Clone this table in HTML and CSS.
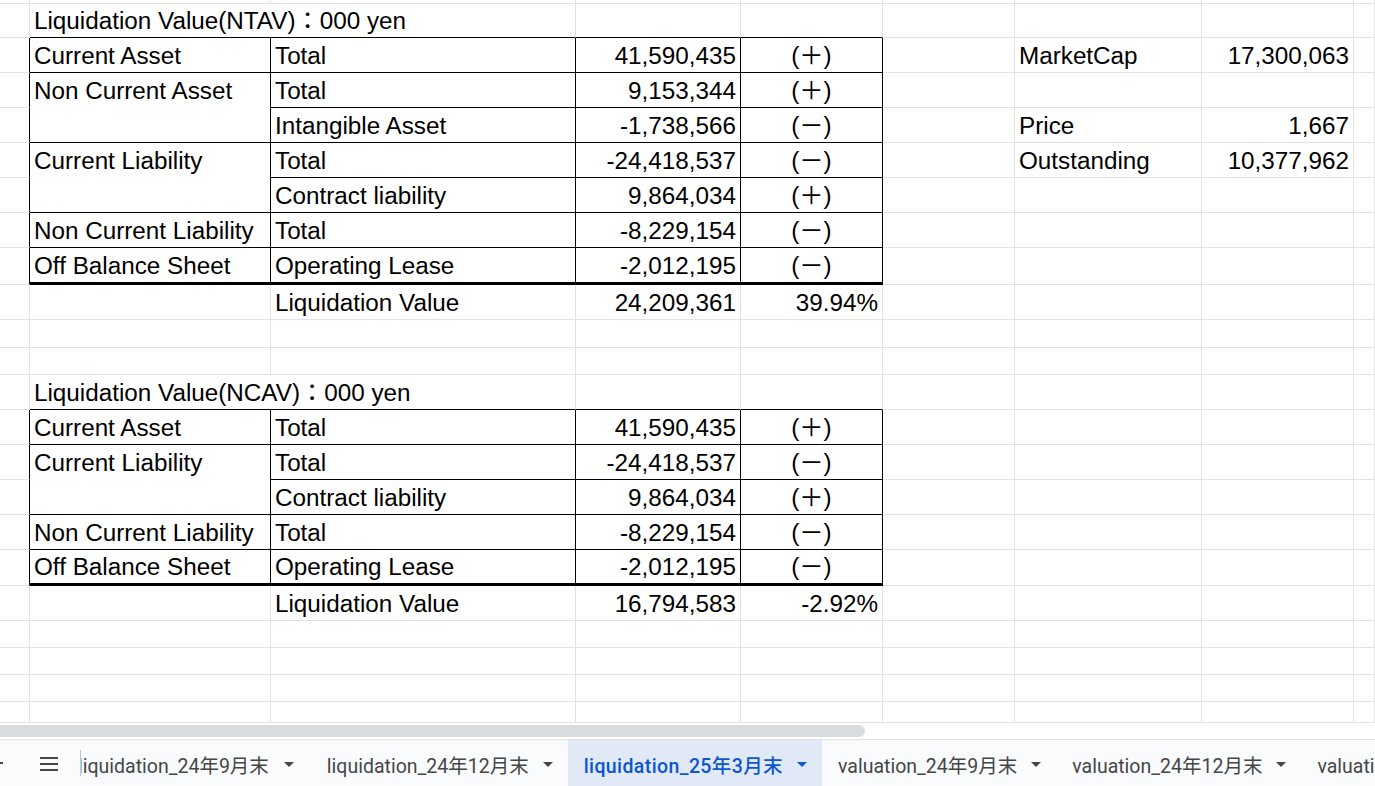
FILE: index.html
```html
<!DOCTYPE html>
<html lang="ja">
<head>
<meta charset="utf-8">
<title>liquidation_25年3月末</title>
<link rel="stylesheet" href="styles.css">
</head>
<body>
<div class="app">
  <div class="sheet">
    <!-- row 0 (partial) -->
    <div class="c"></div><div class="c"></div><div class="c"></div><div class="c"></div><div class="c"></div><div class="c"></div><div class="c"></div><div class="c"></div><div class="c"></div>
    <!-- row 1 -->
    <div class="c"></div><div class="c w2 kb">Liquidation Value(NTAV)：000 yen</div><div class="c kb"></div><div class="c kb"></div><div class="c"></div><div class="c"></div><div class="c"></div><div class="c"></div>
    <!-- row 2 -->
    <div class="c kr"></div><div class="c kb kr">Current Asset</div><div class="c kb kr">Total</div><div class="c kb kr r">41,590,435</div><div class="c kb kr m">(＋)</div><div class="c"></div><div class="c">MarketCap</div><div class="c r">17,300,063</div><div class="c"></div>
    <!-- row 3 -->
    <div class="c kr"></div><div class="c kb kr s2">Non Current Asset</div><div class="c kb kr">Total</div><div class="c kb kr r">9,153,344</div><div class="c kb kr m">(＋)</div><div class="c"></div><div class="c"></div><div class="c"></div><div class="c"></div>
    <!-- row 4 -->
    <div class="c kr"></div><div class="c kb kr">Intangible Asset</div><div class="c kb kr r">-1,738,566</div><div class="c kb kr m">(－)</div><div class="c"></div><div class="c">Price</div><div class="c r">1,667</div><div class="c"></div>
    <!-- row 5 -->
    <div class="c kr"></div><div class="c kb kr s2">Current Liability</div><div class="c kb kr">Total</div><div class="c kb kr r">-24,418,537</div><div class="c kb kr m">(－)</div><div class="c"></div><div class="c">Outstanding</div><div class="c r">10,377,962</div><div class="c"></div>
    <!-- row 6 -->
    <div class="c kr"></div><div class="c kb kr">Contract liability</div><div class="c kb kr r">9,864,034</div><div class="c kb kr m">(＋)</div><div class="c"></div><div class="c"></div><div class="c"></div><div class="c"></div>
    <!-- row 7 -->
    <div class="c kr"></div><div class="c kb kr">Non Current Liability</div><div class="c kb kr">Total</div><div class="c kb kr r">-8,229,154</div><div class="c kb kr m">(－)</div><div class="c"></div><div class="c"></div><div class="c"></div><div class="c"></div>
    <!-- row 8 -->
    <div class="c kr"></div><div class="c k3 kr">Off Balance Sheet</div><div class="c k3 kr">Operating Lease</div><div class="c k3 kr r">-2,012,195</div><div class="c k3 kr m">(－)</div><div class="c"></div><div class="c"></div><div class="c"></div><div class="c"></div>
    <!-- row 9 -->
    <div class="c"></div><div class="c"></div><div class="c">Liquidation Value</div><div class="c r">24,209,361</div><div class="c r">39.94%</div><div class="c"></div><div class="c"></div><div class="c"></div><div class="c"></div>
    <!-- row 10 -->
    <div class="c"></div><div class="c"></div><div class="c"></div><div class="c"></div><div class="c"></div><div class="c"></div><div class="c"></div><div class="c"></div><div class="c"></div>
    <!-- row 11 -->
    <div class="c"></div><div class="c"></div><div class="c"></div><div class="c"></div><div class="c"></div><div class="c"></div><div class="c"></div><div class="c"></div><div class="c"></div>
    <!-- row 12 -->
    <div class="c"></div><div class="c w2 kb">Liquidation Value(NCAV)：000 yen</div><div class="c kb"></div><div class="c kb"></div><div class="c"></div><div class="c"></div><div class="c"></div><div class="c"></div>
    <!-- row 13 -->
    <div class="c kr"></div><div class="c kb kr">Current Asset</div><div class="c kb kr">Total</div><div class="c kb kr r">41,590,435</div><div class="c kb kr m">(＋)</div><div class="c"></div><div class="c"></div><div class="c"></div><div class="c"></div>
    <!-- row 14 -->
    <div class="c kr"></div><div class="c kb kr s2">Current Liability</div><div class="c kb kr">Total</div><div class="c kb kr r">-24,418,537</div><div class="c kb kr m">(－)</div><div class="c"></div><div class="c"></div><div class="c"></div><div class="c"></div>
    <!-- row 15 -->
    <div class="c kr"></div><div class="c kb kr">Contract liability</div><div class="c kb kr r">9,864,034</div><div class="c kb kr m">(＋)</div><div class="c"></div><div class="c"></div><div class="c"></div><div class="c"></div>
    <!-- row 16 -->
    <div class="c kr"></div><div class="c kb kr">Non Current Liability</div><div class="c kb kr">Total</div><div class="c kb kr r">-8,229,154</div><div class="c kb kr m">(－)</div><div class="c"></div><div class="c"></div><div class="c"></div><div class="c"></div>
    <!-- row 17 -->
    <div class="c kr"></div><div class="c k3 kr">Off Balance Sheet</div><div class="c k3 kr">Operating Lease</div><div class="c k3 kr r">-2,012,195</div><div class="c k3 kr m">(－)</div><div class="c"></div><div class="c"></div><div class="c"></div><div class="c"></div>
    <!-- row 18 -->
    <div class="c"></div><div class="c"></div><div class="c">Liquidation Value</div><div class="c r">16,794,583</div><div class="c r">-2.92%</div><div class="c"></div><div class="c"></div><div class="c"></div><div class="c"></div>
    <!-- rows 19-22 -->
    <div class="c"></div><div class="c"></div><div class="c"></div><div class="c"></div><div class="c"></div><div class="c"></div><div class="c"></div><div class="c"></div><div class="c"></div>
    <div class="c"></div><div class="c"></div><div class="c"></div><div class="c"></div><div class="c"></div><div class="c"></div><div class="c"></div><div class="c"></div><div class="c"></div>
    <div class="c"></div><div class="c"></div><div class="c"></div><div class="c"></div><div class="c"></div><div class="c"></div><div class="c"></div><div class="c"></div><div class="c"></div>
    <div class="c"></div><div class="c"></div><div class="c"></div><div class="c"></div><div class="c"></div><div class="c"></div><div class="c"></div><div class="c"></div><div class="c"></div>
  </div>

  <div class="hscroll"><div class="thumb"></div></div>

  <div class="tabbar">
    <div class="add">
      <svg width="18" height="18" viewBox="0 0 18 18"><path d="M9 1v16M1 9h16" stroke="#444746" stroke-width="2" fill="none"/></svg>
    </div>
    <div class="menu">
      <svg width="18" height="14" viewBox="0 0 18 14"><rect x="0" y="0" width="18" height="2" fill="#444746"/><rect x="0" y="6" width="18" height="2" fill="#444746"/><rect x="0" y="12" width="18" height="2" fill="#444746"/></svg>
    </div>
    <div class="sep"></div>
    <div class="tabs">
      <div class="tab first"><span class="tname">liquidation_24年9月末</span><svg class="arr" width="10" height="5" viewBox="0 0 10 5"><polygon points="0,0 10,0 5,5"/></svg></div>
      <div class="tab"><span class="tname">liquidation_24年12月末</span><svg class="arr" width="10" height="5" viewBox="0 0 10 5"><polygon points="0,0 10,0 5,5"/></svg></div>
      <div class="tab active"><span class="tname">liquidation_25年3月末</span><svg class="arr" width="10" height="5" viewBox="0 0 10 5"><polygon points="0,0 10,0 5,5"/></svg></div>
      <div class="tab"><span class="tname">valuation_24年9月末</span><svg class="arr" width="10" height="5" viewBox="0 0 10 5"><polygon points="0,0 10,0 5,5"/></svg></div>
      <div class="tab"><span class="tname">valuation_24年12月末</span><svg class="arr" width="10" height="5" viewBox="0 0 10 5"><polygon points="0,0 10,0 5,5"/></svg></div>
      <div class="tab"><span class="tname">valuation_25年3月末</span><svg class="arr" width="10" height="5" viewBox="0 0 10 5"><polygon points="0,0 10,0 5,5"/></svg></div>
    </div>
  </div>
</div>
</body>
</html>
```

FILE: styles.css
```css
html, body {
  margin: 0;
  padding: 0;
  background: #ffffff;
  overflow: hidden;
}

body {
  font-family: "Liberation Sans", "Noto Sans CJK JP", sans-serif;
}

.app {
  width: 1375px;
  height: 786px;
  display: flex;
  flex-direction: column;
  overflow: hidden;
}

/* ---------- sheet grid ---------- */
.sheet {
  flex: none;
  display: grid;
  grid-template-columns: 30px 241px 305px 165px 142px 132px 187px 152px 1fr;
  grid-template-rows:
    3px 35px repeat(6, 35px) 37px 35px 28px 27px
    35px repeat(4, 35px) 36px 35px 27px 27px 27px 21px;
  font-size: 24.25px;
  line-height: 27px;
  color: #000000;
}

.c {
  box-sizing: border-box;
  min-width: 0;
  border-right: 1px solid #e2e2e2;
  border-bottom: 1px solid #e2e2e2;
  padding: 0 4px 3px 4px;
  display: flex;
  align-items: flex-end;
  white-space: nowrap;
  overflow: hidden;
}

.w2 { grid-column: span 2; }
.s2 {
  grid-row: span 2;
  align-items: flex-start;
  padding-top: 4px;
}

.kr { border-right-color: #000000; }
.kb { border-bottom-color: #000000; }
.k3 { border-bottom: 3px solid #000000; }

.r { justify-content: flex-end; }
.m { justify-content: center; }

/* ---------- horizontal scrollbar ---------- */
.hscroll {
  flex: none;
  height: 16px;
  background: #ffffff;
}

.thumb {
  width: 865px;
  height: 12px;
  margin-top: 2px;
  background: #dadce0;
  border-radius: 0 6px 6px 0;
}

/* ---------- sheet tab bar ---------- */
.tabbar {
  flex: 1;
  display: flex;
  align-items: center;
  border-top: 1px solid #e1e3e6;
  background: #f9fbfd;
  overflow: hidden;
  font-family: Roboto, "Noto Sans CJK JP", sans-serif;
  color: #444746;
}

.add {
  flex: none;
  width: 18px;
  height: 18px;
  margin-left: -14px;
  display: flex;
}

.menu {
  flex: none;
  margin-left: 36px;
  margin-top: 2px;
  display: flex;
}

.sep {
  flex: none;
  width: 1px;
  height: 26px;
  margin-left: 22px;
  background: #c4c7c5;
}

.tabs {
  flex: 1;
  min-width: 0;
  align-self: stretch;
  display: flex;
  overflow: hidden;
}

.tab {
  flex: none;
  display: flex;
  align-items: center;
  gap: 14px;
  padding: 0 15px 0 16px;
  font-size: 19.5px;
  line-height: 24px;
  white-space: nowrap;
}

.tab.first {
  margin-left: -19px;
  gap: 15px;
  padding-right: 17px;
}

.tname { padding-top: 7px; }

.arr {
  display: block;
  margin-top: 2px;
  fill: #444746;
}

.tab.active {
  background: #e1e9f7;
  color: #0b57d0;
  font-weight: 500;
  letter-spacing: 0.4px;
}

.tab.active .arr { fill: #0b57d0; }
```
